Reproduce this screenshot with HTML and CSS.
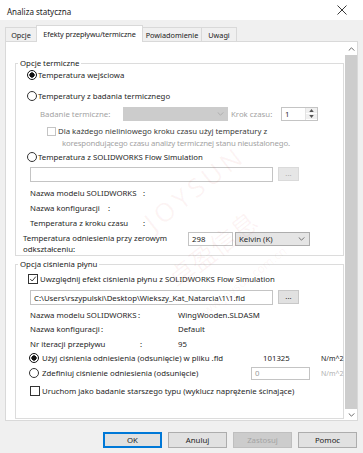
FILE: index.html
```html
<!DOCTYPE html>
<html lang="pl">
<head>
<meta charset="utf-8">
<title>Analiza statyczna</title>
<link rel="stylesheet" href="styles.css">
</head>
<body>
<div class="titlebar">
  <span class="title">Analiza statyczna</span>
  <svg class="close" viewBox="0 0 10 10" width="10" height="10"><path d="M0.5 0.5 L9.5 9.5 M9.5 0.5 L0.5 9.5" stroke="#222" stroke-width="0.9" fill="none"/></svg>
</div>
<div class="dialog">
  <div class="tabs">
    <div class="tab t-opcje">Opcje</div>
    <div class="tab active t-efekty">Efekty przepływu/termiczne</div>
    <div class="tab t-pow">Powiadomienie</div>
    <div class="tab t-uwagi">Uwagi</div>
  </div>
  <div class="panel">
    <div class="content">
      <fieldset class="group g1">
        <legend>Opcje termiczne</legend>
        <div class="row opt o1"><span class="radio on"></span><span>Temperatura wejściowa</span></div>
        <div class="row opt o2"><span class="radio"></span><span>Temperatury z badania termicznego</span></div>
        <div class="row study">
          <span class="dim lbl-study">Badanie termiczne:</span>
          <span class="select disabled"><svg class="chev" viewBox="0 0 8 5" width="7" height="4"><path d="M0.5 0.5 L4 4 L7.5 0.5" stroke="#a8a8a8" fill="none"/></svg></span>
          <span class="dim krok">Krok czasu:</span>
          <span class="spin"><span class="spin-val">1</span><span class="spin-btns"><span class="sb"><svg viewBox="0 0 6 4" width="5" height="3"><path d="M0 4 L3 0 L6 4 Z" fill="#555"/></svg></span><span class="sb"><svg viewBox="0 0 6 4" width="5" height="3"><path d="M0 0 L3 4 L6 0 Z" fill="#555"/></svg></span></span></span>
        </div>
        <div class="nonlin">
          <span class="check dis"></span>
          <div class="nonlin-text">
            <div class="l1">Dla każdego nieliniowego kroku czasu użyj temperatury z</div>
            <div class="l2">korespondującego czasu analizy termicznej stanu nieustalonego.</div>
          </div>
        </div>
        <div class="row opt o3"><span class="radio"></span><span>Temperatura z SOLIDWORKS Flow Simulation</span></div>
        <div class="filerow f1"><span class="field file"></span><span class="browse dis">...</span></div>
        <div class="row info i1"><span class="lbl w113">Nazwa modelu SOLIDWORKS</span><span>:</span></div>
        <div class="row info i2"><span class="lbl w78">Nazwa konfiguracji</span><span>:</span></div>
        <div class="row info i3"><span class="lbl w113">Temperatura z kroku czasu</span><span>:</span></div>
        <div class="refrow">
          <div class="reftext">Temperatura odniesienia przy zerowym<br>odkształceniu:</div>
          <span class="field ref">298</span>
          <span class="select unit"><span>Kelvin (K)</span><svg class="chev" viewBox="0 0 8 5" width="7" height="4"><path d="M0.5 0.5 L4 4 L7.5 0.5" stroke="#555" fill="none"/></svg></span>
        </div>
      </fieldset>
      <fieldset class="group g2">
        <legend>Opcja ciśnienia płynu</legend>
        <div class="row chkrow c1"><span class="check on"><svg viewBox="0 0 10 10" width="8" height="8"><path d="M1.5 5 L4 7.5 L8.5 2" stroke="#222" stroke-width="1.1" fill="none"/></svg></span><span>Uwzględnij efekt ciśnienia płynu z SOLIDWORKS Flow Simulation</span></div>
        <div class="filerow f2"><span class="field file">C:\Users\rszypulski\Desktop\Wiekszy_Kat_Natarcia\1\1.fld</span><span class="browse">...</span></div>
        <div class="row info j1"><span class="left"><span class="lbl w108">Nazwa modelu SOLIDWORKS</span><span>:</span></span><span>WingWooden.SLDASM</span></div>
        <div class="row info j2"><span class="left"><span class="lbl w70">Nazwa konfiguracji</span><span>:</span></span><span>Default</span></div>
        <div class="row info j3"><span class="left"><span class="lbl w110">Nr iteracji przepływu</span><span>:</span></span><span>95</span></div>
        <div class="row popt p1"><span class="radio on"></span><span class="plbl w221">Użyj ciśnienia odniesienia (odsunięcie) w pliku .fld</span><span class="pval">101325</span><span class="punit">N/m^2</span></div>
        <div class="row popt p2"><span class="radio"></span><span class="plbl w209">Zdefiniuj ciśnienie odniesienia (odsunięcie)</span><span class="field pfield">0</span><span class="punit dim">N/m^2</span></div>
        <div class="row chkrow c2"><span class="check"></span><span>Uruchom jako badanie starszego typu (wyklucz naprężenie ścinające)</span></div>
      </fieldset>
    </div>
    <div class="scrollbar">
      <span class="sarrow up"><svg viewBox="0 0 8 5" width="7" height="4"><path d="M0.5 4.5 L4 1 L7.5 4.5" stroke="#444" fill="none"/></svg></span>
      <span class="thumb"></span>
      <span class="sarrow down"><svg viewBox="0 0 8 5" width="7" height="4"><path d="M0.5 0.5 L4 4 L7.5 0.5" stroke="#444" fill="none"/></svg></span>
    </div>
  </div>
  <div class="buttons">
    <span class="btn default">OK</span>
    <span class="btn">Anuluj</span>
    <span class="btn disabled">Zastosuj</span>
    <span class="btn">Pomoc</span>
  </div>
</div>
<div class="watermark">
  <span class="wm-brand">JOYSUN</span>
  <span class="wm-cn">卓盈信息</span>
  <span class="wm-url">www.joysun.com.cn</span>
</div>
</body>
</html>
```

FILE: styles.css
```css
* { box-sizing: border-box; }
html, body { margin: 0; padding: 0; }
body {
  width: 363px;
  height: 453px;
  overflow: hidden;
  position: relative;
  background: #f0f0f0;
  font-family: "Noto Sans", "Open Sans", sans-serif;
  font-size: 7.8px;
  color: #262626;
}

/* title bar */
.titlebar {
  height: 20px;
  background: #fff;
  display: flex;
  align-items: center;
  justify-content: space-between;
  padding: 3px 16px 0 7px;
}
.title { font-size: 8px; color: #222; }
.close { margin-top: -3px; }

/* dialog */
.dialog { padding: 5px 0 0 5px; }
.tabs {
  display: flex;
  align-items: flex-end;
  height: 17px;
  margin-bottom: -1px;
  position: relative;
  z-index: 1;
}
.tab {
  height: 14px;
  margin-bottom: 1px;
  margin-left: -1px;
  border: 1px solid #d9d9d9;
  border-bottom: none;
  background: #f0f0f0;
  display: flex;
  align-items: center;
  justify-content: center;
  color: #222;
  white-space: nowrap;
  font-size: 7.3px;
}
.t-opcje { width: 32px; margin-left: 0; }
.t-efekty { width: 107px; }
.t-pow { width: 60px; }
.t-uwagi { width: 36px; }
.tab.active {
  height: 17px;
  margin-bottom: 0;
  background: #fff;
  padding-bottom: 1px;
  letter-spacing: -0.1px;
}

.panel {
  width: 353px;
  height: 380px;
  border: 1px solid #d9d9d9;
  background: #fff;
  display: flex;
}
.content {
  flex: 1;
  padding: 0 1px 0 9px;
  min-width: 0;
}
.scrollbar {
  width: 12px;
  flex: none;
  display: flex;
  flex-direction: column;
  background: #fff;
  position: relative;
}
.sarrow {
  display: flex;
  align-items: center;
  justify-content: center;
}
.sarrow.up { height: 13px; }
.sarrow.down { height: 11px; }
.thumb { flex: 1; background: #cdcdcd; }

/* groups */
.group {
  margin: 16px 0 0;
  padding: 0;
  border: 1px solid #dcdcdc;
  min-width: 0;
}
.group legend {
  padding: 0 2px;
  margin-left: 2px;
  line-height: 10px;
  height: 10px;
  color: #222;
}
.g2 { margin-top: 3px; padding-bottom: 20px; }

.row {
  display: flex;
  align-items: center;
  height: 14px;
  white-space: nowrap;
}
.radio {
  width: 10px;
  height: 10px;
  flex: none;
  border: 1px solid #333;
  border-radius: 50%;
  background: #fff;
}
.radio.on {
  border-color: #111;
  background: radial-gradient(circle, #111 0 2.4px, #fff 2.9px);
}
.check {
  width: 10px;
  height: 10px;
  flex: none;
  border: 1px solid #333;
  background: #fff;
  display: flex;
  align-items: center;
  justify-content: center;
}
.check.dis { width: 9px; height: 9px; border-color: #c4c4c4; }
.dim { color: #a3a3a3; }

.opt { margin-left: 11px; }
.opt .radio { margin-right: 1px; }
.o1 { margin-top: 0; }
.o2 { margin-top: 7px; }
.o3 { margin-top: 1px; }

.study { margin-top: 4px; margin-left: 24px; }
.lbl-study { width: 83px; flex: none; }
.select {
  height: 14px;
  display: flex;
  align-items: center;
  justify-content: space-between;
  flex: none;
}
.select.disabled { width: 105px; background: #cccccc; justify-content: flex-end; padding-right: 4px; }
.krok { margin-left: 3px; width: 50px; flex: none; }
.spin {
  width: 37px;
  height: 14px;
  border: 1px solid #c4c4c4;
  display: flex;
  flex: none;
}
.spin-val { flex: 1; padding-left: 3px; line-height: 12px; color: #333; }
.spin-btns {
  width: 12px;
  display: flex;
  flex-direction: column;
  border-left: 1px solid #e3e3e3;
}
.sb {
  flex: 1;
  background: #f0f0f0;
  display: flex;
  align-items: center;
  justify-content: center;
  border-bottom: 1px solid #fff;
}

.nonlin {
  margin-top: 4px;
  margin-left: 31px;
  display: flex;
  align-items: flex-start;
  white-space: nowrap;
}
.nonlin .check { margin-top: 2px; margin-right: 2px; }
.nonlin-text { line-height: 12px; }
.l1 { color: #3a3a3a; }
.l2 { color: #a3a3a3; padding-left: 4px; letter-spacing: -0.15px; }

.filerow {
  display: flex;
  margin-left: 14px;
  gap: 5px;
  height: 15px;
}
.f1 { margin-top: 3px; }
.f2 { margin-top: 4px; }
.field {
  height: 100%;
  border: 1px solid #c4c4c4;
  background: #fff;
  display: flex;
  align-items: center;
  padding-left: 3px;
  white-space: nowrap;
  overflow: hidden;
  color: #222;
}
.file { width: 243px; }
.browse {
  width: 21px;
  height: 14px;
  background: #e1e1e1;
  border: 1px solid #c8c8c8;
  display: flex;
  align-items: center;
  justify-content: center;
  line-height: 1;
  color: #333;
}
.browse.dis { color: #b0b0b0; background: #e6e6e6; border-color: #dadada; }

.info { margin-left: 14px; }
.i1 { margin-top: 4px; }
.i2, .i3 { margin-top: 1px; }
.lbl { flex: none; }
.w113 { width: 113px; }
.w78 { width: 78px; }
.w108 { width: 108px; }
.w70 { width: 71px; }
.w110 { width: 110px; }
.left { width: 148px; display: flex; flex: none; }

.refrow {
  margin-top: 2px;
  margin-left: 7px;
  display: flex;
  align-items: flex-start;
  height: 23px;
}
.reftext { width: 165px; flex: none; line-height: 11px; padding-top: 1px; white-space: nowrap; }
.field.ref { width: 45px; height: 14px; flex: none; }
.select.unit {
  width: 75px;
  margin-left: 2px;
  background: #e5e5e5;
  border: 1px solid #adadad;
  padding: 0 4px 0 3px;
}

.chkrow .check { margin-right: 2px; }
.c1 { margin-top: 3px; margin-left: 12px; }
.j1 { margin-top: 3px; }
.j2 { margin-top: 0; }
.j3 { margin-top: 1px; }
.popt { margin-left: 13px; }
.popt .radio { margin-right: 3px; }
.p1 { margin-top: 0; }
.p2 { margin-top: 1px; }
.plbl { flex: none; }
.w221 { width: 221px; }
.w209 { width: 209px; }
.pval { width: 58px; flex: none; }
.field.pfield { width: 59px; height: 13px; flex: none; margin-right: 11px; color: #999; }
.punit { color: #222; flex: none; font-size: 7px; }
.punit.dim { color: #b0b0b0; }
.c2 { margin-top: 4px; margin-left: 14px; }

/* buttons */
.buttons {
  display: flex;
  justify-content: flex-end;
  gap: 6px;
  padding-right: 6px;
  margin-top: 11px;
}
.btn {
  width: 59px;
  height: 16px;
  border: 1px solid #adadad;
  background: #e1e1e1;
  display: flex;
  align-items: center;
  justify-content: center;
  color: #222;
}
.btn.default { border-color: #0078d7; box-shadow: inset 0 0 0 1px #0078d7; }
.btn.disabled { background: #cccccc; border-color: #bfbfbf; color: #a3a3a3; }

/* watermark overlay */
.watermark { position: absolute; inset: 0; pointer-events: none; }
.watermark span { position: absolute; color: rgba(215, 70, 70, 0.06); white-space: nowrap; }
.wm-brand { left: 135px; top: 170px; font-size: 26px; letter-spacing: 4px; transform: rotate(-38deg); }
.wm-cn { left: 160px; top: 230px; font-family: "Noto Sans CJK SC", sans-serif; font-size: 26px; transform: rotate(-38deg); }
.wm-url { left: 185px; top: 275px; font-size: 12px; transform: rotate(-38deg); }
```
